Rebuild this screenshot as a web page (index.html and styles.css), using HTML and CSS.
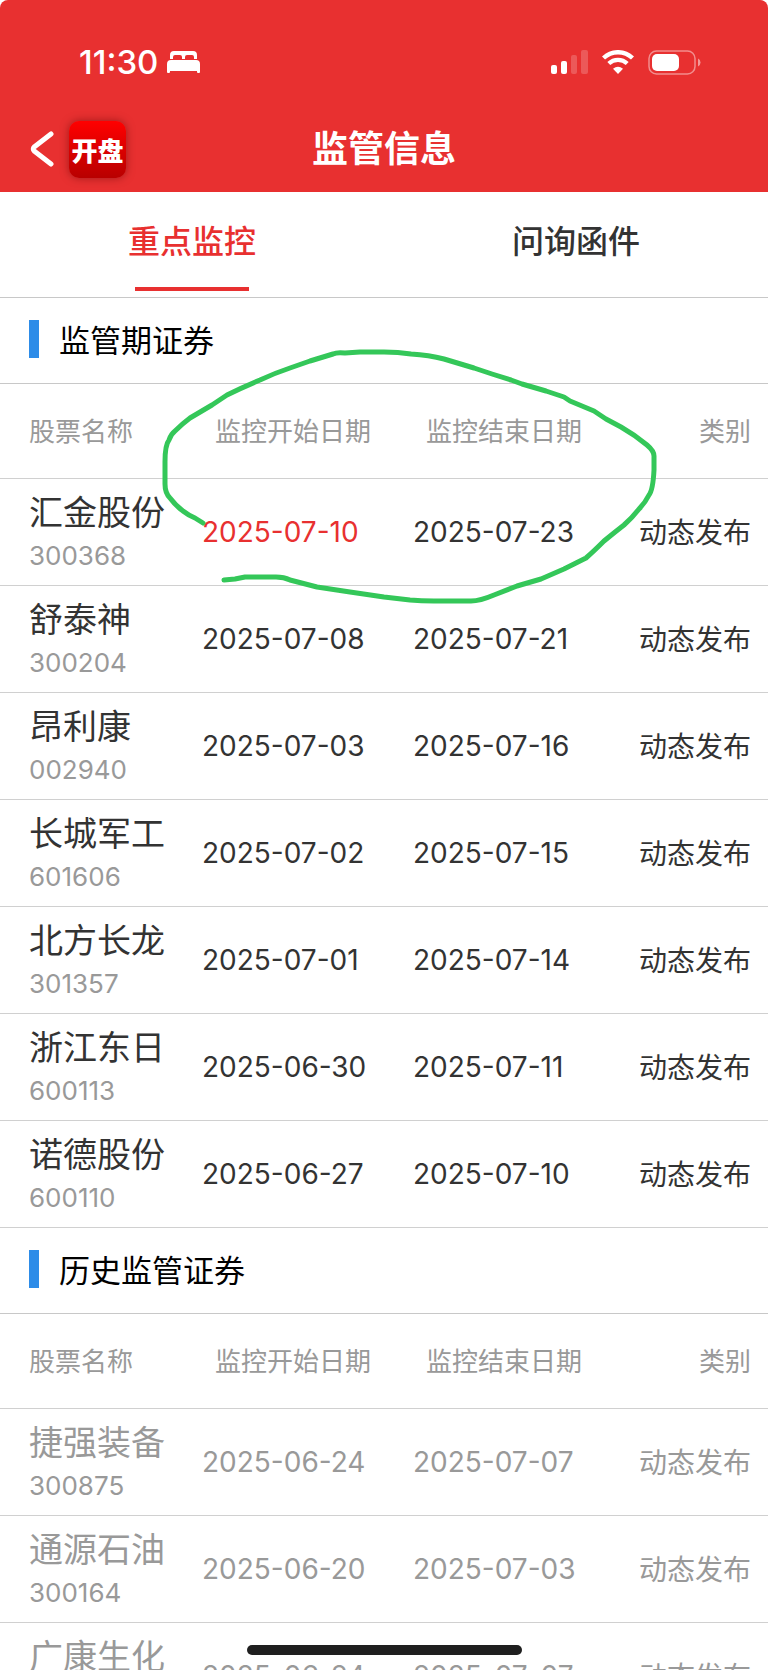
FILE: index.html
```html
<!DOCTYPE html>
<html lang="zh-CN">
<head>
    <meta charset="UTF-8">
    <meta name="viewport" content="width=device-width, initial-scale=1.0">
    <title>监管信息</title>
    <link rel="stylesheet" href="styles.css">
</head>
<body>
<div class="app">

<header>
    <div class="status-bar">
        <span class="time">11:30</span>
        <svg class="bed" width="34" height="24" viewBox="0 0 34 24" fill="#fff">
            <path d="M3 9V5Q3 1 7 1H26Q30 1 30 5V9H27V7Q27 5 25 5H20Q18 5 18 7V9H15V7Q15 5 13 5H8Q6 5 6 7V9Z"/>
            <path d="M4 10H29Q33 10 33 14V22Q33 23 32 23H31Q30 23 30 22V21H3V22Q3 23 2 23H1Q0 23 0 22V14Q0 10 4 10Z"/>
        </svg>
        <div class="status-icons">
            <svg width="37" height="24" viewBox="0 0 37 24" fill="#fff">
                <rect x="0" y="15" width="6" height="9" rx="2"/>
                <rect x="10" y="11" width="6" height="13" rx="2"/>
                <rect x="20" y="5" width="6" height="19" rx="2" opacity="0.2"/>
                <rect x="30" y="0" width="7" height="24" rx="2" opacity="0.2"/>
            </svg>
            <svg width="32" height="24" viewBox="0 0 32 24">
                <path d="M1.5 8A21 21 0 0 1 30.5 8" fill="none" stroke="#fff" stroke-width="4.4"/>
                <path d="M6.8 13.6A13.3 13.3 0 0 1 25.2 13.6" fill="none" stroke="#fff" stroke-width="4.2"/>
                <path d="M16 24L11 18.8Q16 14.6 21 18.8Z" fill="#fff"/>
            </svg>
            <svg width="53" height="25" viewBox="0 0 53 25">
                <rect x="1" y="1" width="46" height="23" rx="7.5" fill="none" stroke="#fff" stroke-width="1.5" opacity="0.45"/>
                <rect x="4" y="4" width="27" height="17" rx="5" fill="#fff"/>
                <path d="M50 8.5Q52.5 9.5 52.5 12.5Q52.5 15.5 50 16.5Z" fill="#fff" opacity="0.5"/>
            </svg>
        </div>
    </div>
    <div class="nav-bar">
        <a class="back" href="#back" aria-label="返回">
            <svg width="24" height="36" viewBox="0 0 24 36">
                <path d="M21 3L4.5 15.700Q2 18 4.5 20.300L21 33" fill="none" stroke="#fff" stroke-width="5" stroke-linecap="round" stroke-linejoin="round"/>
            </svg>
        </a>
        <span class="logo">开盘</span>
        <h1>监管信息</h1>
    </div>
</header>

<nav class="tabs">
    <button class="tab active">重点监控</button>
    <button class="tab">问询函件</button>
</nav>

<main>
    <h2>监管期证券</h2>
    <table>
        <thead>
            <tr>
                <th class="name">股票名称</th>
                <th class="date">监控开始日期</th>
                <th class="date">监控结束日期</th>
                <th class="type">类别</th>
            </tr>
        </thead>
        <tbody>
            <tr>
                <td class="name">汇金股份<small>300368</small></td>
                <td class="date new">2025-07-10</td>
                <td class="date">2025-07-23</td>
                <td class="type">动态发布</td>
            </tr>
            <tr>
                <td class="name">舒泰神<small>300204</small></td>
                <td class="date">2025-07-08</td>
                <td class="date">2025-07-21</td>
                <td class="type">动态发布</td>
            </tr>
            <tr>
                <td class="name">昂利康<small>002940</small></td>
                <td class="date">2025-07-03</td>
                <td class="date">2025-07-16</td>
                <td class="type">动态发布</td>
            </tr>
            <tr>
                <td class="name">长城军工<small>601606</small></td>
                <td class="date">2025-07-02</td>
                <td class="date">2025-07-15</td>
                <td class="type">动态发布</td>
            </tr>
            <tr>
                <td class="name">北方长龙<small>301357</small></td>
                <td class="date">2025-07-01</td>
                <td class="date">2025-07-14</td>
                <td class="type">动态发布</td>
            </tr>
            <tr>
                <td class="name">浙江东日<small>600113</small></td>
                <td class="date">2025-06-30</td>
                <td class="date">2025-07-11</td>
                <td class="type">动态发布</td>
            </tr>
            <tr>
                <td class="name">诺德股份<small>600110</small></td>
                <td class="date">2025-06-27</td>
                <td class="date">2025-07-10</td>
                <td class="type">动态发布</td>
            </tr>
        </tbody>
    </table>

    <h2>历史监管证券</h2>
    <table class="history">
        <thead>
            <tr>
                <th class="name">股票名称</th>
                <th class="date">监控开始日期</th>
                <th class="date">监控结束日期</th>
                <th class="type">类别</th>
            </tr>
        </thead>
        <tbody>
            <tr>
                <td class="name">捷强装备<small>300875</small></td>
                <td class="date">2025-06-24</td>
                <td class="date">2025-07-07</td>
                <td class="type">动态发布</td>
            </tr>
            <tr>
                <td class="name">通源石油<small>300164</small></td>
                <td class="date">2025-06-20</td>
                <td class="date">2025-07-03</td>
                <td class="type">动态发布</td>
            </tr>
            <tr>
                <td class="name">广康生化</td>
                <td class="date">2025-06-24</td>
                <td class="date">2025-07-07</td>
                <td class="type">动态发布</td>
            </tr>
        </tbody>
    </table>
</main>

<!-- hand-drawn circle round the first dates -->
<svg class="marker" width="500" height="260" viewBox="160 345 500 260">
    <path d="M203 523L195 518Q188 515 183 511Q176 506 170 498Q165 493 165 484V462Q165 445 169 440Q171 434 175 431Q182 424 190 418L212 405L227 395Q243 387 260 380Q275 373 290 368L310 361L333 354Q337 352 345 353L360 352H384Q398 352 411 354Q429 355 444 359L464 365L474 368L492 374L511 380L522 384L546 391L564 397L570 401L594 411L606 419L621 427Q635 435 647 445Q654 451 654 456V470Q653 490 649 495Q645 503 639 509Q632 518 624 525Q615 532 604 541Q594 551 586 558L576 563L564 569L541 579L517 586L494 595Q480 601 471 601H434Q421 601 410 600L384 597L350 592L317 587L290 580Q284 577 276 577H245L235 579L224 580" fill="none" stroke="#34c759" stroke-width="5" stroke-linecap="round" stroke-linejoin="round"/>
</svg>

<div class="home-indicator"></div>

</div>
</body>
</html>
```

FILE: styles.css
```css
* {
    box-sizing: border-box;
}
body {
    margin: 0;
    background-color: #fff;
    color: #333;
    font-family: Inter, "Noto Sans CJK SC", sans-serif;
}
.app {
    position: relative;
    height: 100vh;
    overflow: hidden;
}
header {
    background-color: #e83030;
    color: #fff;
    border-radius: 8px 8px 0 0;
}
.status-bar {
    display: flex;
    align-items: center;
    height: 106px;
    padding: 18px 67px 0 79px;
}
.time {
    font-size: 33px;
    font-weight: 500;
}
.bed {
    margin-left: 9px;
}
.status-icons {
    display: flex;
    align-items: center;
    gap: 14px;
    margin-left: auto;
}
.nav-bar {
    position: relative;
    display: flex;
    align-items: center;
    height: 86px;
    padding: 0 30px;
}
.back {
    display: flex;
}
.logo {
    display: flex;
    align-items: center;
    justify-content: center;
    width: 57px;
    height: 57px;
    margin-left: 15px;
    border-radius: 10px;
    background: linear-gradient(#ff0000, #b80000);
    box-shadow: 0 0 8px rgba(90, 0, 0, 0.5);
    font-size: 26px;
    font-weight: 900;
}
h1 {
    position: absolute;
    left: 0;
    right: 0;
    margin: 0;
    text-align: center;
    font-size: 36px;
    line-height: 54px;
    font-weight: 600;
    pointer-events: none;
}
.tabs {
    display: flex;
    height: 106px;
    border-bottom: 1px solid #c8c8c8;
}
.tab {
    position: relative;
    flex: 1;
    padding: 0 0 12px;
    border: none;
    background: none;
    color: #333;
    font-family: inherit;
    font-size: 32px;
    font-weight: 500;
    cursor: pointer;
}
.tab.active {
    color: #e83030;
}
.tab.active::after {
    content: "";
    position: absolute;
    left: 50%;
    bottom: 6px;
    width: 114px;
    height: 4px;
    margin-left: -57px;
    background-color: #e83030;
}
h2 {
    display: flex;
    align-items: center;
    height: 86px;
    margin: 0;
    padding: 0 29px 4px;
    border-bottom: 1px solid #c8c8c8;
    color: #000;
    font-size: 31px;
    font-weight: 400;
}
h2::before {
    content: "";
    width: 10px;
    height: 38px;
    margin-right: 20px;
    background-color: #2d8ce8;
}
table {
    width: 100%;
    table-layout: fixed;
    border-collapse: separate;
    border-spacing: 0;
}
th, td {
    padding: 0;
    border-bottom: 1px solid #d0d0d0;
    text-align: left;
    font-weight: 400;
}
th {
    height: 95px;
    padding-bottom: 4px;
    color: #999;
    font-size: 26px;
}
td {
    height: 107px;
    font-size: 28px;
}
.name {
    width: 202px;
    padding-left: 29px;
}
.date {
    width: 211px;
}
th.date {
    padding-left: 13px;
}
.type {
    padding-bottom: 3px;
    padding-right: 17px;
    text-align: right;
}
td.name {
    padding-top: 10px;
    vertical-align: top;
    font-size: 34px;
    line-height: 48px;
}
.name small {
    display: block;
    color: #999;
    font-size: 26px;
    line-height: 38px;
}
.new {
    color: #e83030;
}
.history td {
    color: #999;
}
.marker {
    position: absolute;
    left: 160px;
    top: 345px;
    pointer-events: none;
}
.home-indicator {
    position: absolute;
    left: 50%;
    bottom: 15px;
    width: 275px;
    height: 10px;
    margin-left: -137px;
    border-radius: 5px;
    background-color: #1f1f1f;
}
```
